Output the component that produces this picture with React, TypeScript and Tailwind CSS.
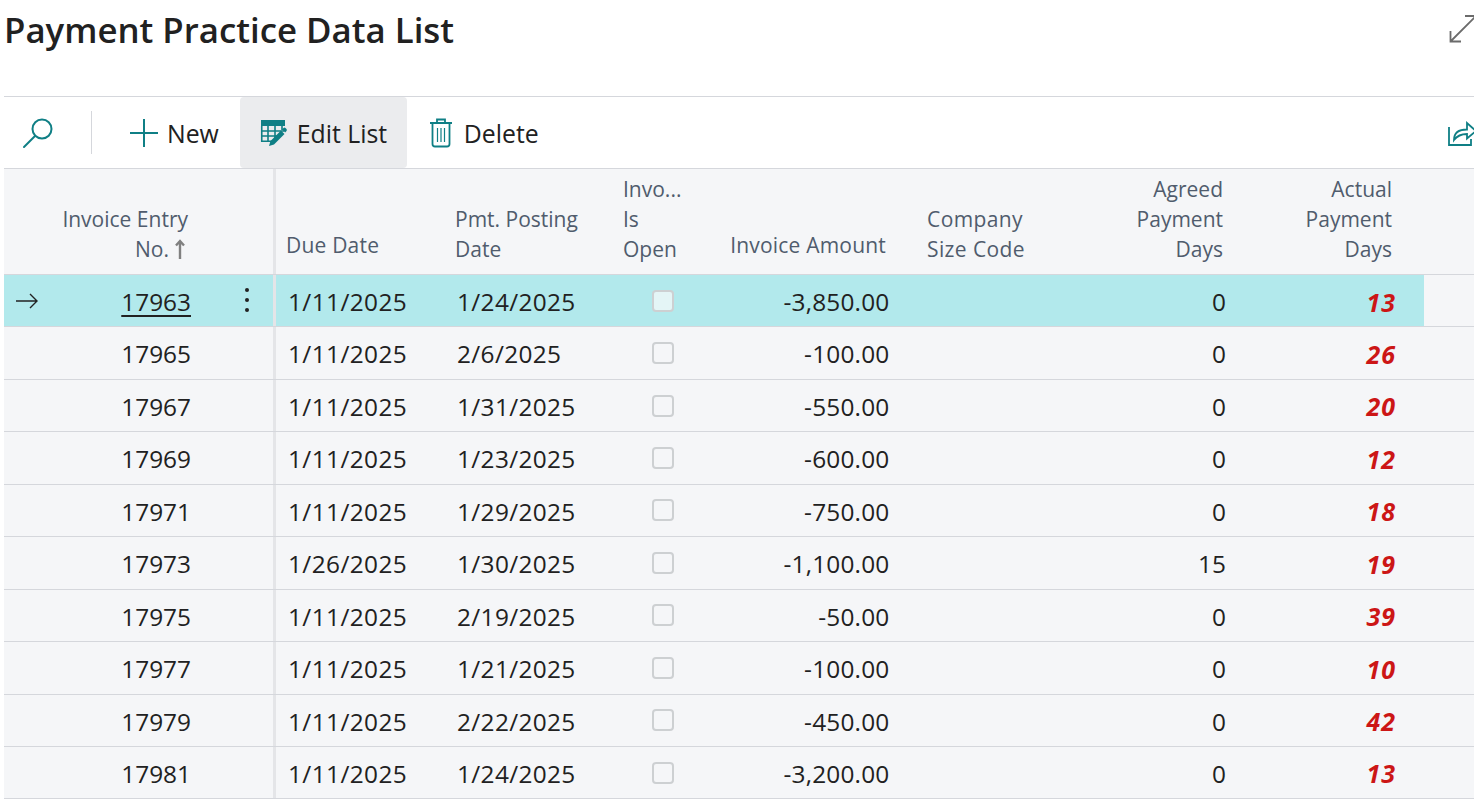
import React from "react";

const rows = [
  { no: "17963", due: "1/11/2025", posting: "1/24/2025", amount: "-3,850.00", agreed: "0", actual: "13" },
  { no: "17965", due: "1/11/2025", posting: "2/6/2025", amount: "-100.00", agreed: "0", actual: "26" },
  { no: "17967", due: "1/11/2025", posting: "1/31/2025", amount: "-550.00", agreed: "0", actual: "20" },
  { no: "17969", due: "1/11/2025", posting: "1/23/2025", amount: "-600.00", agreed: "0", actual: "12" },
  { no: "17971", due: "1/11/2025", posting: "1/29/2025", amount: "-750.00", agreed: "0", actual: "18" },
  { no: "17973", due: "1/26/2025", posting: "1/30/2025", amount: "-1,100.00", agreed: "15", actual: "19" },
  { no: "17975", due: "1/11/2025", posting: "2/19/2025", amount: "-50.00", agreed: "0", actual: "39" },
  { no: "17977", due: "1/11/2025", posting: "1/21/2025", amount: "-100.00", agreed: "0", actual: "10" },
  { no: "17979", due: "1/11/2025", posting: "2/22/2025", amount: "-450.00", agreed: "0", actual: "42" },
  { no: "17981", due: "1/11/2025", posting: "1/24/2025", amount: "-3,200.00", agreed: "0", actual: "13" },
];

const teal = "#0f7f85";

function SearchIcon() {
  return (
    <svg width="32" height="34" viewBox="0 0 32 34" fill="none" stroke={teal} strokeWidth="2">
      <circle cx="20" cy="13" r="9.5" />
      <path d="M13 20 L2 31" strokeLinecap="round" />
    </svg>
  );
}

function PlusIcon() {
  return (
    <svg width="28" height="28" viewBox="0 0 28 28" stroke={teal} strokeWidth="2">
      <path d="M14 0 V28 M0 14 H28" />
    </svg>
  );
}

function EditListIcon() {
  return (
    <svg width="28" height="28" viewBox="0 0 28 28" fill="none">
      <rect x="1" y="1" width="24" height="6" fill={teal} />
      <path d="M1.75 7 V22.25 H14 M1.75 12 H24 M1.75 17 H17 M8 7 V22 M15 7 V19 M22 7 V11" stroke={teal} strokeWidth="1.6" />
      <path d="M9 27 L10.5 22 L21 11.5 L24.5 15 L14 25.5 Z" fill={teal} />
      <path d="M22 10.5 L23.5 9 Q24.5 8.2 25.5 9 L26.5 10 Q27.2 11 26.5 12 L25.2 13.5 Z" fill={teal} />
    </svg>
  );
}

function TrashIcon() {
  return (
    <svg width="24" height="30" viewBox="0 0 24 30" fill="none" stroke={teal} strokeWidth="1.8">
      <path d="M1 5 H23 M8 5 V1.5 H16 V5" />
      <path d="M3.5 5 V26 Q3.5 28.5 6 28.5 H18 Q20.5 28.5 20.5 26 V5" />
      <path d="M8.5 10 V24 M12 10 V24 M15.5 10 V24" strokeWidth="1.2" />
    </svg>
  );
}

function ShareIcon() {
  return (
    <svg width="28" height="28" viewBox="0 0 28 28" fill="none" stroke={teal} strokeWidth="1.8" className="shrink-0">
      <path d="M1 8 V26 H23 V20" />
      <path d="M6 21 C6 14 11 10.5 19 10.5 V4 L28 12 L19 19.5 V15 C13 15 9 17 6 21 Z" />
    </svg>
  );
}

function ExpandIcon() {
  return (
    <svg width="28" height="28" viewBox="0 0 28 28" fill="none" stroke="#6b6b6b" strokeWidth="1.8" className="shrink-0">
      <path d="M1.5 26.5 L26 2 M1.5 16 V26.5 H12 M16 1 H26.5 V11" />
    </svg>
  );
}

function ArrowIcon() {
  return (
    <svg width="24" height="16" viewBox="0 0 24 16" fill="none" stroke="#222" strokeWidth="1.4">
      <path d="M1 8 H22 M15 1 L22 8 L15 15" />
    </svg>
  );
}

function Row({ row, selected }: { row: (typeof rows)[number]; selected: boolean }) {
  return (
    <div className="flex h-[52.44px] border-b border-[#d5d7dc] text-[24.4px] leading-[30px] text-[#212121]">
      <div className={`flex w-[1420px] shrink-0 items-center ${selected ? "bg-[#b2e9ec]" : ""}`}>
        <div className="relative flex h-full w-[272px] items-center justify-end border-r-[3px] border-[#e4e5e8] pr-[82px] pt-[2.6px]">
          {selected && (
            <span className="absolute left-[11px] top-[18px]">
              <ArrowIcon />
            </span>
          )}
          <span className={selected ? "underline underline-offset-[4px]" : ""}>{row.no}</span>
          {selected && (
            <span className="absolute left-[241px] top-[13px] flex flex-col gap-[6px]">
              <span className="h-[4px] w-[4px] rounded-full bg-[#222]" />
              <span className="h-[4px] w-[4px] rounded-full bg-[#222]" />
              <span className="h-[4px] w-[4px] rounded-full bg-[#222]" />
            </span>
          )}
        </div>
        <div className="w-[169px] pl-[12px] pt-[2.6px] tracking-[0.4px]">{row.due}</div>
        <div className="w-[168px] pl-[12px] pt-[2.6px] tracking-[0.35px]">{row.posting}</div>
        <div className="flex w-[92px] pl-[39px]">
          <span
            className={`h-[22px] w-[22px] rounded-[4px] border-2 border-[#cdd0d2] ${
              selected ? "bg-[#e4f5f6]" : "bg-[#f5f6f8]"
            }`}
          />
        </div>
        <div className="w-[194px] pr-[9.5px] pt-[2.6px] text-right tracking-[0.2px]">{row.amount}</div>
        <div className="w-[168px]" />
        <div className="w-[169px] pr-[10px] pt-[2.6px] text-right">{row.agreed}</div>
        <div className="w-[169px] pr-[9px] pt-[1.6px] text-right text-[25px] font-bold italic tracking-[1px] text-[#cc1616]">
          {row.actual}
        </div>
      </div>
    </div>
  );
}

export default function App() {
  return (
    <div className="h-[800px] w-[1474px] overflow-hidden bg-white pl-[4px] font-['Open_Sans',sans-serif]">
      <div className="flex h-[97px] items-start justify-between border-b border-[#d5d7dc]">
        <h1 className="ml-0 mt-[7px] text-[34.8px] font-semibold leading-[46px] text-[#212121]">
          Payment Practice Data List
        </h1>
        <div className="mr-[-2px] mt-[15px] w-[27px] overflow-hidden">
          <ExpandIcon />
        </div>
      </div>

      <div className="flex h-[72px] items-center border-b border-[#d5d7dc] text-[24.8px] text-[#212121]">
        <div className="ml-[18px] w-[32px]">
          <SearchIcon />
        </div>
        <div className="ml-[37px] h-[43px] w-px bg-[#d5d7dc]" />
        <div className="ml-[38px] flex items-center gap-[9px]">
          <PlusIcon />
          <span className="mt-[2px]">New</span>
        </div>
        <div className="ml-[21px] flex h-[71px] w-[167px] items-center gap-[9px] rounded-[4px] bg-[#ebecee] pl-[20px]">
          <EditListIcon />
          <span className="mt-[2px]">Edit List</span>
        </div>
        <div className="ml-[22px] flex items-center gap-[11px]">
          <TrashIcon />
          <span className="mt-[2px]">Delete</span>
        </div>
        <div className="ml-auto w-[26px] overflow-hidden">
          <ShareIcon />
        </div>
      </div>

      <div className="flex h-[106px] border-b border-[#d5d7dc] bg-[#f5f6f8] pb-[10px] text-[21px] leading-[30px] text-[#505c6d]">
        <div className="relative mb-[-10px] flex w-[272px] flex-col items-end justify-end border-r-[3px] border-[#e4e5e8] pb-[10px] pr-[85px] text-right">
          <span>Invoice Entry</span>
          <span className="flex items-center gap-[5px] pr-[2px]">
            No.
            <svg width="12" height="20" viewBox="0 0 12 20" fill="none" stroke="#808080" strokeWidth="2.4">
              <path d="M6 20 V2 M2 6.5 L6 2 L10 6.5" />
            </svg>
          </span>
        </div>
        <div className="flex w-[169px] items-end pb-[4px] pl-[10px] tracking-[0.2px]">Due Date</div>
        <div className="flex w-[168px] items-end pl-[10px]">
          <span>
            Pmt. Posting
            <br />
            Date
          </span>
        </div>
        <div className="flex w-[92px] items-end pl-[10px]">
          <span>
            Invo...
            <br />
            Is
            <br />
            Open
          </span>
        </div>
        <div className="flex w-[194px] items-end justify-end pb-[4px] pr-[13px] tracking-[0.2px]">Invoice Amount</div>
        <div className="flex w-[168px] items-end pl-[28px] tracking-[0.4px]">
          <span>
            Company
            <br />
            Size Code
          </span>
        </div>
        <div className="flex w-[169px] items-end justify-end pr-[13px] text-right">
          <span>
            Agreed
            <br />
            Payment
            <br />
            Days
          </span>
        </div>
        <div className="flex w-[169px] items-end justify-end pr-[13px] text-right">
          <span>
            Actual
            <br />
            Payment
            <br />
            Days
          </span>
        </div>
      </div>

      <div className="bg-[#f5f6f8]">
        {rows.map((row, i) => (
          <Row key={row.no} row={row} selected={i === 0} />
        ))}
      </div>
    </div>
  );
}
